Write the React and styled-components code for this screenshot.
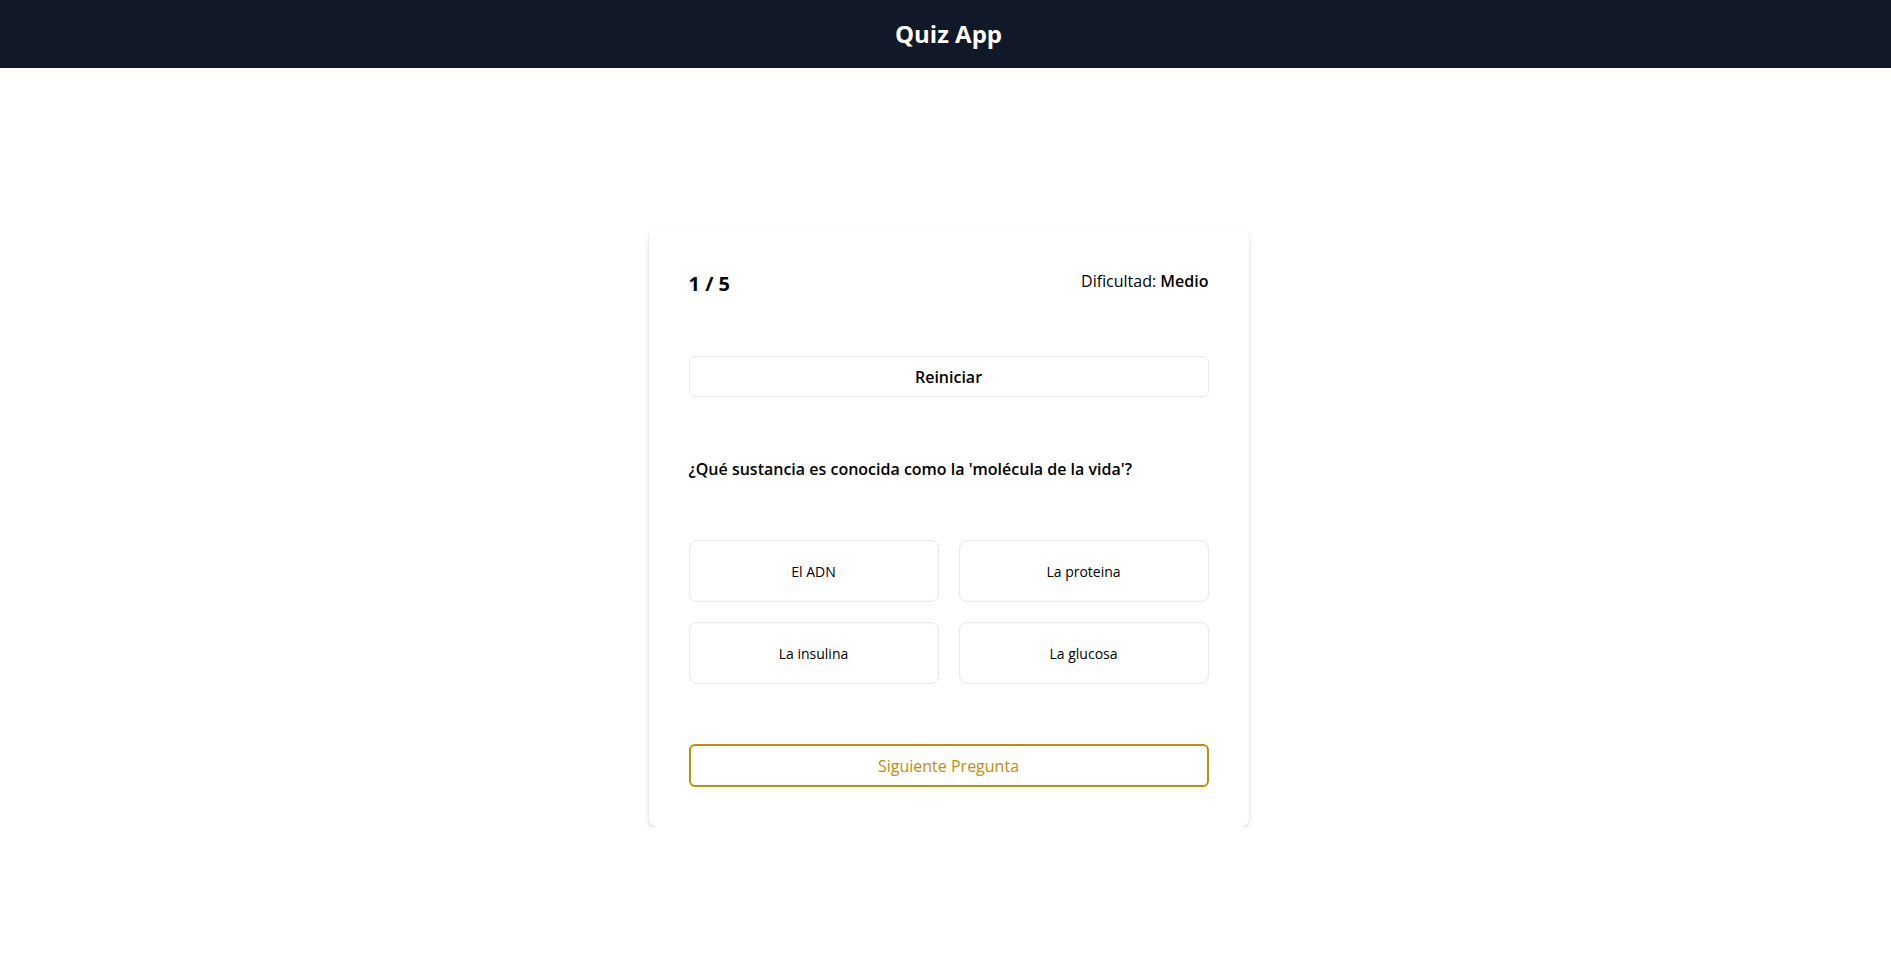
import React from 'react'
import styled, { createGlobalStyle } from 'styled-components'

const GlobalStyle = createGlobalStyle`
	* { box-sizing: border-box; }
	body {
		margin: 0;
		background: #ffffff;
		font-family: 'Open Sans', 'Noto Sans', sans-serif;
		color: #000000;
	}
`

const Header = styled.header`
	height: 68px;
	background: #111827;
	display: flex;
	align-items: center;
	justify-content: center;
	padding: 0 0 2px 6px;
`

const Title = styled.h1`
	margin: 0;
	color: #ffffff;
	font-size: 24px;
	font-weight: 700;
`

const Main = styled.main`
	display: flex;
	justify-content: center;
	padding: 161px 0 0 6px;
`

const Card = styled.section`
	width: 600px;
	background: #ffffff;
	border-radius: 8px;
	padding: 40px;
	box-shadow: 0 4px 6px -1px rgba(30, 41, 80, 0.18), 0 2px 4px -2px rgba(30, 41, 80, 0.12),
		0 0 0 1px rgba(0, 0, 0, 0.02);
`

const TopRow = styled.div`
	display: flex;
	justify-content: space-between;
	align-items: center;
	height: 28px;
`

const Counter = styled.span`
	font-size: 20px;
	font-weight: 700;
`

const Difficulty = styled.span`
	font-size: 16px;
	margin-top: -4px;
	b { font-weight: 600; }
`

const Button = styled.button`
	display: block;
	width: 100%;
	height: ${p => (p.$accent ? '43px' : '41px')};
	background: #ffffff;
	border-radius: 6px;
	font-family: inherit;
	font-size: 16px;
	cursor: pointer;
	border: ${p => (p.$accent ? '2px solid #ca8a04' : '1px solid #e5e7eb')};
	color: ${p => (p.$accent ? '#ca8a04' : '#000000')};
	font-weight: ${p => (p.$accent ? 500 : 600)};
	margin-top: ${p => p.$top}px;
`

const Question = styled.p`
	margin: 60px 0 0;
	font-size: 16px;
	font-weight: 600;
	line-height: 24px;
`

const Options = styled.div`
	display: grid;
	grid-template-columns: 1fr 1fr;
	gap: 20px;
	margin-top: 59px;
`

const Option = styled.button`
	height: 62px;
	background: #ffffff;
	border: 1px solid #e5e7eb;
	border-radius: 8px;
	font-family: inherit;
	font-size: 14px;
	font-weight: 500;
	color: #000000;
	cursor: pointer;
`

const answers = ['El ADN', 'La proteina', 'La insulina', 'La glucosa']

const App = () => {
	return (
		<>
			<GlobalStyle />
			<Header>
				<Title>Quiz App</Title>
			</Header>
			<Main>
				<Card>
					<TopRow>
						<Counter>1 / 5</Counter>
						<Difficulty>
							Dificultad: <b>Medio</b>
						</Difficulty>
					</TopRow>
					<Button $top={59}>Reiniciar</Button>
					<Question>¿Qué sustancia es conocida como la 'molécula de la vida'?</Question>
					<Options>
						{answers.map(a => (
							<Option key={a}>{a}</Option>
						))}
					</Options>
					<Button $accent $top={60}>Siguiente Pregunta</Button>
				</Card>
			</Main>
		</>
	)
}

export default App
